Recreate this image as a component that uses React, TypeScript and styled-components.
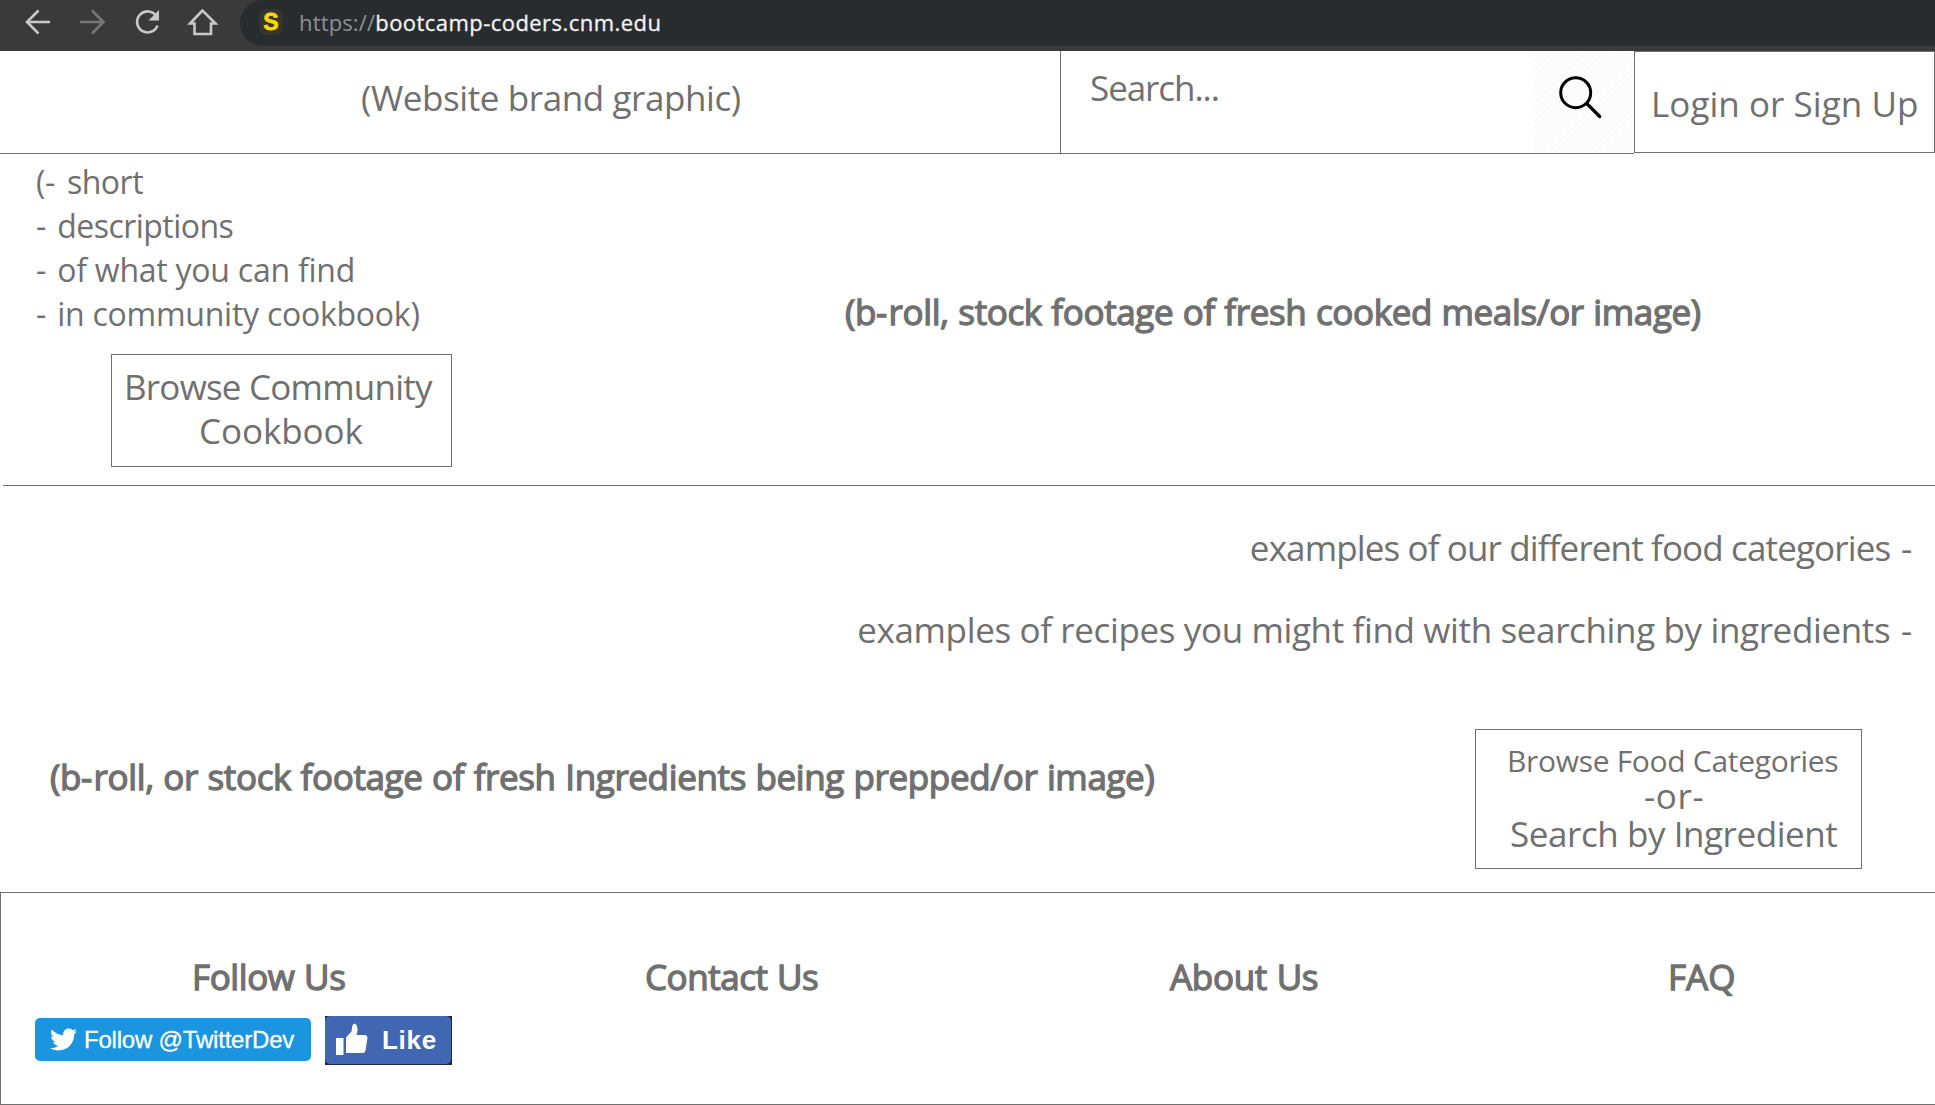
import React from 'react';
import styled, { createGlobalStyle } from 'styled-components';
import { FaTwitter } from 'react-icons/fa';

const INK = '#707070';

const GlobalStyle = createGlobalStyle`
  * { box-sizing: border-box; }
  body { margin: 0; background: #fff; color: ${INK}; overflow: hidden; }
  svg { display: block; flex: none; }
`;

const Page = styled.div`
  display: flex;
  flex-direction: column;
  width: 1935px;
  height: 1105px;
  font-family: 'Open Sans', 'Noto Sans', sans-serif;
`;

const BrowserBar = styled.div`
  display: flex;
  flex: none;
  height: 51px;
  background: #3b3a3a;
`;

const NavIcons = styled.div`
  width: 240px;
  flex: none;
`;

const AddressBar = styled.div`
  display: flex;
  flex: 1;
  height: 46px;
  padding-left: 19px;
  background: #282c2f;
  border-radius: 23px 0 0 23px;
`;

const SiteBadge = styled.span`
  width: 24px;
  height: 26px;
  margin-top: 9px;
  background: #35352f;
  border-radius: 7px;
  color: #ffd500;
  font: 700 23px/27px 'Liberation Sans', sans-serif;
  -webkit-text-stroke: 0.8px #ffd500;
  text-align: center;
`;

const Url = styled.span`
  margin-left: 16px;
  font-size: 22px;
  line-height: 44px;
  letter-spacing: 0.45px;
  color: #f2f2f2;
  -webkit-text-stroke: 0.3px #f2f2f2;
  white-space: nowrap;
`;

const Scheme = styled.span`
  letter-spacing: 0.15px;
  color: #8d9194;
  -webkit-text-stroke: 0;
`;

const Text = styled.div<{ $size?: number; $track?: number; $indent?: number; $line?: number }>`
  font-size: ${(p) => p.$size ?? 35}px;
  line-height: ${(p) => p.$line ?? 44}px;
  letter-spacing: ${(p) => p.$track ?? 0}px;
  margin-left: ${(p) => p.$indent ?? 0}px;
  white-space: nowrap;
`;

const Dash = styled.span<{ $gap?: number }>`
  letter-spacing: ${(p) => p.$gap ?? 1.3}px;
`;

const Title = styled(Text)`
  word-spacing: 0.8px;
  -webkit-text-stroke: 1.3px ${INK};
`;

const Header = styled.header`
  display: flex;
  flex: none;
  height: 103px;
`;

const Brand = styled.div`
  width: 1060px;
  padding: 25px 0 0 361px;
  border-bottom: 1px solid ${INK};
`;

const SearchBox = styled.div`
  display: flex;
  justify-content: space-between;
  width: 574px;
  padding-left: 29px;
  border-left: 1px solid ${INK};
  border-bottom: 1px solid ${INK};
`;

const SearchLabel = styled.div`
  padding-top: 15px;
`;

const SearchButton = styled.div`
  width: 101px;
  background: repeating-linear-gradient(135deg, #fff 0 2px, #fafafa 2px 4px);
`;

const Login = styled.div`
  flex: 1;
  height: 102px;
  padding: 30px 0 0 16px;
  border: 1px solid ${INK};
`;

const Hero = styled.section`
  display: flex;
  flex: none;
  height: 331px;
`;

const Intro = styled.div`
  width: 845px;
  padding: 6px 0 0 36px;
`;

const ActionBox = styled.div<{ $w: number; $h: number }>`
  width: ${(p) => p.$w}px;
  height: ${(p) => p.$h}px;
  border: 1px solid ${INK};
`;

const CookbookBox = styled(ActionBox)`
  margin: 18px 0 0 75px;
  padding-top: 10px;
`;

const HeroMedia = styled.div`
  padding-top: 136px;
`;

const Divider = styled.div`
  flex: none;
  height: 1px;
  margin-left: 3px;
  background: ${INK};
`;

const Explore = styled.section`
  display: flex;
  flex-direction: column;
  flex: none;
  height: 406px;
  padding-top: 40px;
`;

const Examples = styled.div`
  display: flex;
  flex-direction: column;
  align-items: flex-end;
  gap: 38px;
  padding-right: 21px;
`;

const ExploreRow = styled.div`
  display: flex;
  justify-content: space-between;
  margin-top: 77px;
  padding: 0 73px 0 50px;
`;

const ExploreMedia = styled.div`
  padding-top: 26px;
`;

const CategoryBox = styled(ActionBox)`
  padding-top: 12px;
`;

const Footer = styled.footer`
  display: grid;
  grid-template-columns: 644px 523px 500px 1fr;
  flex: 1;
  padding-top: 62px;
  border: 1px solid ${INK};
  border-right: 0;
`;

const SocialRow = styled.div`
  display: flex;
  align-items: flex-start;
  gap: 14px;
  margin: 17px 0 0 34px;
`;

const TwitterButton = styled.div`
  display: flex;
  align-items: center;
  width: 276px;
  height: 43px;
  margin-top: 2px;
  padding-left: 15px;
  gap: 7px;
  border-radius: 5px;
  background: #1b95e0;
  color: #fff;
  font: 24px/43px 'Liberation Sans', Arial, sans-serif;
  letter-spacing: -0.2px;
  -webkit-text-stroke: 0.3px #fff;
  white-space: nowrap;
`;

const LikeFrame = styled.div`
  width: 127px;
  height: 49px;
  background: #1d2a4d;
`;

const LikeButton = styled.div`
  display: flex;
  width: 126px;
  height: 48px;
  border-radius: 5px;
  background: #4267b2;
  color: #fff;
  font: 700 26px/48px 'Liberation Sans', Arial, sans-serif;
  letter-spacing: 0.7px;
`;

const ToolbarIcons = () => (
  <svg width="240" height="50" fill="none" stroke="#c8c8c8" strokeWidth="2.6">
    <path d="M50 22H27M38.5 10.5L27 22L38.5 33.5" />
    <path d="M80 22H103M92 10.5L103.500 22L92 33.500" stroke="#777" />
    <path d="M156.300 16A10.500 10.500 0 1 0 157.500 25.500" />
    <path d="M159 10V20.500H148.500Z" fill="#c8c8c8" stroke="none" />
    <path d="M202.500 10.500L190 23.500H194.500V34H211V23.500H215.500Z" />
  </svg>
);

const SearchIcon = () => (
  <svg width="101" height="102" fill="none" stroke="#000" strokeWidth="3">
    <circle cx="42.700" cy="41.700" r="15" />
    <path d="M53.700 52.500L66.700 65.500" strokeWidth="3.200" strokeLinecap="round" />
  </svg>
);

const ThumbIcon = () => (
  <svg width="57" height="48" fill="#fff">
    <path d="M11 22H18.500V39H11Z" />
    <path d="M21 21.500L26.500 15.500L27.300 10Q29 5.500 31.500 9Q33.500 13 31.500 19H40Q43 19.500 42.300 23L40.500 34.500Q40 37 37.500 37H21Z" />
  </svg>
);

export default function App() {
  return (
    <Page>
      <GlobalStyle />
      <BrowserBar>
        <NavIcons><ToolbarIcons /></NavIcons>
        <AddressBar>
          <SiteBadge>S</SiteBadge>
          <Url><Scheme>https://</Scheme>bootcamp-coders.cnm.edu</Url>
        </AddressBar>
      </BrowserBar>
      <Header>
        <Brand><Text $track={-0.41}>(Website brand graphic)</Text></Brand>
        <SearchBox>
          <SearchLabel><Text $track={-1.06}>Search...</Text></SearchLabel>
          <SearchButton><SearchIcon /></SearchButton>
        </SearchBox>
        <Login><Text $track={0.05}>Login or Sign Up</Text></Login>
      </Header>
      <Hero>
        <Intro>
          <Text $size={32} $track={-0.5}>(<Dash $gap={1.7}>- </Dash>short</Text>
          <Text $size={32} $track={-0.54}><Dash>- </Dash>descriptions</Text>
          <Text $size={32} $track={-0.24}><Dash>- </Dash>of what you can find</Text>
          <Text $size={32} $track={-0.25}><Dash>- </Dash>in community cookbook)</Text>
          <CookbookBox $w={341} $h={113}>
            <Text $track={-0.78} $indent={12}>Browse Community</Text>
            <Text $track={-0.08} $indent={87}>Cookbook</Text>
          </CookbookBox>
        </Intro>
        <HeroMedia>
          <Title $track={-0.37}>(b<Dash>-</Dash>roll, stock footage of fresh cooked meals/or image)</Title>
        </HeroMedia>
      </Hero>
      <Divider />
      <Explore>
        <Examples>
          <Text $track={-0.87}>examples of our different food categories<Dash $gap={1.7}> -</Dash></Text>
          <Text $track={-0.365}>examples of recipes you might find with searching by ingredients<Dash $gap={1.7}> -</Dash></Text>
        </Examples>
        <ExploreRow>
          <ExploreMedia>
            <Title $track={-0.365}>(b<Dash>-</Dash>roll, or stock footage of fresh Ingredients being prepped/or image)</Title>
          </ExploreMedia>
          <CategoryBox $w={387} $h={140}>
            <Text $size={30} $track={-0.31} $indent={31} $line={38}>Browse Food Categories</Text>
            <Text $track={0.6} $indent={168} $line={32}>-or-</Text>
            <Text $track={-0.43} $indent={34}>Search by Ingredient</Text>
          </CategoryBox>
        </ExploreRow>
      </Explore>
      <Footer>
        <div>
          <Title $track={-0.4} $indent={191}>Follow Us</Title>
          <SocialRow>
            <TwitterButton><FaTwitter size={27} />Follow @TwitterDev</TwitterButton>
            <LikeFrame><LikeButton><ThumbIcon />Like</LikeButton></LikeFrame>
          </SocialRow>
        </div>
        <Title $track={-0.45}>Contact Us</Title>
        <Title $track={-0.3} $indent={2}>About Us</Title>
        <Title>FAQ</Title>
      </Footer>
    </Page>
  );
}
